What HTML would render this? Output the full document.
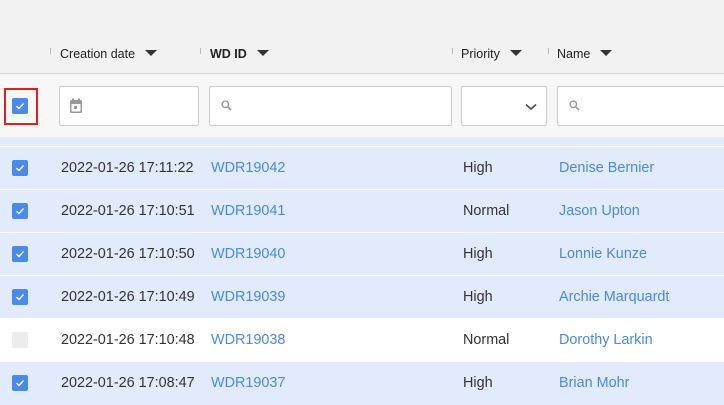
<!DOCTYPE html><html><head><style>
*{margin:0;padding:0;box-sizing:border-box}
body{width:724px;height:403px;overflow:hidden;background:#fff;font-family:"Liberation Sans",sans-serif;position:relative}
.a{position:absolute}
.hd{font-size:12.5px;color:#222;top:47px}
.tri{display:inline-block;width:0;height:0;border-left:6px solid transparent;border-right:6px solid transparent;border-top:6px solid #333;margin-left:10px;vertical-align:2px}
.sep{width:1px;height:6px;background:#bbb;top:48px}
.inp{background:#fff;border:1px solid #ccc;border-radius:2px;top:86px;height:40px}
.row{left:0;width:724px;height:42px;background:#e1ebfb;font-size:14.4px;color:#333}
.row span{position:absolute;top:13px}
.l{color:#4a8ae8}
.cb{position:absolute;left:12px;top:13px;width:16px;height:16px;background:#4a8ae8;border-radius:2px}
.cb svg{position:absolute;left:3px;top:3px}
.cb.off{background:#ececec}
</style></head><body>
<div class="a" style="left:0;top:0;width:724px;height:73px;background:#f2f2f2"></div>
<div class="a" style="left:0;top:73px;width:724px;height:1px;background:#d4d4d4"></div>
<div class="a" style="left:0;top:74px;width:724px;height:63px;background:#f7f7f7"></div>
<div class="a" style="left:0;top:137px;width:724px;height:9px;background:#e1ebfb"></div>
<div class="a sep" style="left:50px"></div><div class="a sep" style="left:200px"></div><div class="a sep" style="left:452px"></div><div class="a sep" style="left:548px"></div>
<div class="a hd" style="left:60px">Creation date<span class="tri"></span></div>
<div class="a hd" style="left:210px;font-weight:bold">WD ID<span class="tri"></span></div>
<div class="a hd" style="left:461px">Priority<span class="tri"></span></div>
<div class="a hd" style="left:557px">Name<span class="tri"></span></div>
<div class="a" style="left:4px;top:88px;width:34px;height:37px;border:2px solid #e0201f"></div>
<div class="a cb" style="top:98px"><svg width="10" height="10" viewBox="0 0 10 10"><path d="M1.5 5.2L4 7.5L8.5 2.5" stroke="#fff" stroke-width="1.4" fill="none"/></svg></div>
<div class="a inp" style="left:59px;width:140px"><svg class="a" style="left:9px;top:11px" width="14" height="16" viewBox="0 0 14 16"><rect x="1" y="2" width="12" height="13" rx="1.5" fill="#999"/><rect x="2.5" y="6" width="9" height="7.5" fill="#fff"/><rect x="3" y="0.5" width="2" height="3" fill="#999"/><rect x="9" y="0.5" width="2" height="3" fill="#999"/><rect x="5" y="8" width="3" height="3" fill="#999"/></svg></div>
<div class="a inp" style="left:209px;width:243px"><svg class="a" style="left:11px;top:13px" width="11" height="11" viewBox="0 0 11 11"><circle cx="4.3" cy="4.3" r="3.2" stroke="#999" stroke-width="1.4" fill="none"/><path d="M6.8 6.8L10 10" stroke="#999" stroke-width="1.6"/></svg></div>
<div class="a inp" style="left:461px;width:86px"><svg class="a" style="left:63px;top:16px" width="12" height="8" viewBox="0 0 12 8"><path d="M1 1.5L6 6L11 1.5" stroke="#555" stroke-width="1.8" fill="none"/></svg></div>
<div class="a inp" style="left:557px;width:180px"><svg class="a" style="left:11px;top:13px" width="11" height="11" viewBox="0 0 11 11"><circle cx="4.3" cy="4.3" r="3.2" stroke="#999" stroke-width="1.4" fill="none"/><path d="M6.8 6.8L10 10" stroke="#999" stroke-width="1.6"/></svg></div>

<div class="a row" style="top:147px"><div class="cb"><svg width="10" height="10" viewBox="0 0 10 10"><path d="M1.5 5.2L4 7.5L8.5 2.5" stroke="#fff" stroke-width="1.4" fill="none"/></svg></div><span style="left:61px">2022-01-26 17:11:22</span><span class="l" style="left:211px">WDR19042</span><span style="left:463px">High</span><span class="l" style="left:559px">Denise Bernier</span></div>
<div class="a row" style="top:190px"><div class="cb"><svg width="10" height="10" viewBox="0 0 10 10"><path d="M1.5 5.2L4 7.5L8.5 2.5" stroke="#fff" stroke-width="1.4" fill="none"/></svg></div><span style="left:61px">2022-01-26 17:10:51</span><span class="l" style="left:211px">WDR19041</span><span style="left:463px">Normal</span><span class="l" style="left:559px">Jason Upton</span></div>
<div class="a row" style="top:233px"><div class="cb"><svg width="10" height="10" viewBox="0 0 10 10"><path d="M1.5 5.2L4 7.5L8.5 2.5" stroke="#fff" stroke-width="1.4" fill="none"/></svg></div><span style="left:61px">2022-01-26 17:10:50</span><span class="l" style="left:211px">WDR19040</span><span style="left:463px">High</span><span class="l" style="left:559px">Lonnie Kunze</span></div>
<div class="a row" style="top:276px"><div class="cb"><svg width="10" height="10" viewBox="0 0 10 10"><path d="M1.5 5.2L4 7.5L8.5 2.5" stroke="#fff" stroke-width="1.4" fill="none"/></svg></div><span style="left:61px">2022-01-26 17:10:49</span><span class="l" style="left:211px">WDR19039</span><span style="left:463px">High</span><span class="l" style="left:559px">Archie Marquardt</span></div>
<div class="a row" style="top:319px;background:#fff"><div class="cb off"></div><span style="left:61px">2022-01-26 17:10:48</span><span class="l" style="left:211px">WDR19038</span><span style="left:463px">Normal</span><span class="l" style="left:559px">Dorothy Larkin</span></div>
<div class="a row" style="top:362px;height:43px"><div class="cb"><svg width="10" height="10" viewBox="0 0 10 10"><path d="M1.5 5.2L4 7.5L8.5 2.5" stroke="#fff" stroke-width="1.4" fill="none"/></svg></div><span style="left:61px">2022-01-26 17:08:47</span><span class="l" style="left:211px">WDR19037</span><span style="left:463px">High</span><span class="l" style="left:559px">Brian Mohr</span></div>
</body></html>
